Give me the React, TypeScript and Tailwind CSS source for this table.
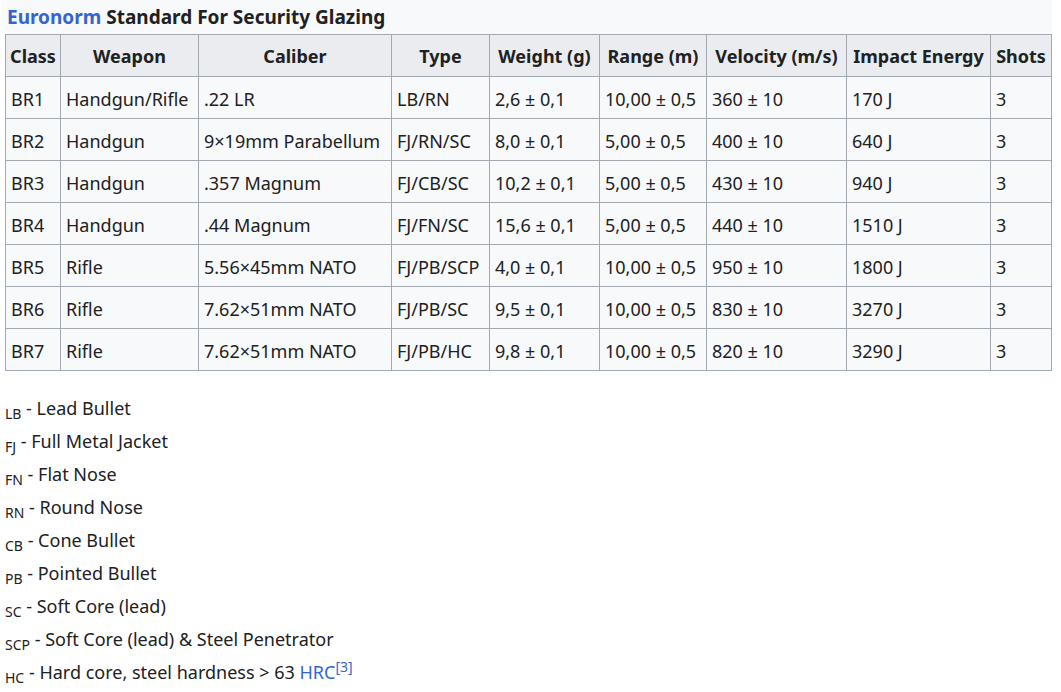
const cols = [55, 138, 193, 98, 110, 107, 140, 144, 61];

const headers = ['Class', 'Weapon', 'Caliber', 'Type', 'Weight (g)', 'Range (m)', 'Velocity (m/s)', 'Impact Energy', 'Shots'];

const rows = [
  ['BR1', 'Handgun/Rifle', '.22 LR', 'LB/RN', '2,6 ± 0,1', '10,00 ± 0,5', '360 ± 10', '170 J', '3'],
  ['BR2', 'Handgun', '9×19mm Parabellum', 'FJ/RN/SC', '8,0 ± 0,1', '5,00 ± 0,5', '400 ± 10', '640 J', '3'],
  ['BR3', 'Handgun', '.357 Magnum', 'FJ/CB/SC', '10,2 ± 0,1', '5,00 ± 0,5', '430 ± 10', '940 J', '3'],
  ['BR4', 'Handgun', '.44 Magnum', 'FJ/FN/SC', '15,6 ± 0,1', '5,00 ± 0,5', '440 ± 10', '1510 J', '3'],
  ['BR5', 'Rifle', '5.56×45mm NATO', 'FJ/PB/SCP', '4,0 ± 0,1', '10,00 ± 0,5', '950 ± 10', '1800 J', '3'],
  ['BR6', 'Rifle', '7.62×51mm NATO', 'FJ/PB/SC', '9,5 ± 0,1', '10,00 ± 0,5', '830 ± 10', '3270 J', '3'],
  ['BR7', 'Rifle', '7.62×51mm NATO', 'FJ/PB/HC', '9,8 ± 0,1', '10,00 ± 0,5', '820 ± 10', '3290 J', '3'],
];

const legend = [
  ['LB', 'Lead Bullet'],
  ['FJ', 'Full Metal Jacket'],
  ['FN', 'Flat Nose'],
  ['RN', 'Round Nose'],
  ['CB', 'Cone Bullet'],
  ['PB', 'Pointed Bullet'],
  ['SC', 'Soft Core (lead)'],
  ['SCP', 'Soft Core (lead) & Steel Penetrator'],
];

export default function App() {
  return (
    <div className="min-h-[692px] bg-white text-[#202122] font-['Noto_Sans',sans-serif]">
      <div className="w-[1052px] pl-[2px]">
        <div className="bg-[#f8f9fa] h-[34px] flex items-center pl-[5px] text-[19px] font-bold">
          <span className="text-[#3366cc]">Euronorm</span>
          <span className="ml-[5px]">Standard For Security Glazing</span>
        </div>
      </div>
      <table className="ml-[5px] table-fixed border-collapse bg-[#f8f9fa] text-[18px]">
        <colgroup>
          {cols.map((w, i) => (
            <col key={i} style={{ width: w }} />
          ))}
        </colgroup>
        <thead>
          <tr className="h-[42px]">
            {headers.map((h) => (
              <th key={h} className="border border-[#a2a9b1] bg-[#eaecf0] px-[4px] pt-[2px] text-center font-bold whitespace-nowrap">
                {h}
              </th>
            ))}
          </tr>
        </thead>
        <tbody>
          {rows.map((r) => (
            <tr key={r[0]} className="h-[42px]">
              {r.map((c, i) => (
                <td key={i} className="border border-[#a2a9b1] px-[5px] pt-[3px] whitespace-nowrap">
                  {c}
                </td>
              ))}
            </tr>
          ))}
        </tbody>
      </table>
      <div className="mt-[21px] pl-[5px] text-[18px] leading-[33px]">
        {legend.map(([a, t]) => (
          <div key={a}>
            <sub className="text-[14px]">{a}</sub> - {t}
          </div>
        ))}
        <div>
          <sub className="text-[14px]">HC</sub> - Hard core, steel hardness &gt; 63{' '}
          <span className="text-[#3366cc]">
            HRC<sup className="text-[14px]">[3]</sup>
          </span>
        </div>
      </div>
    </div>
  );
}
